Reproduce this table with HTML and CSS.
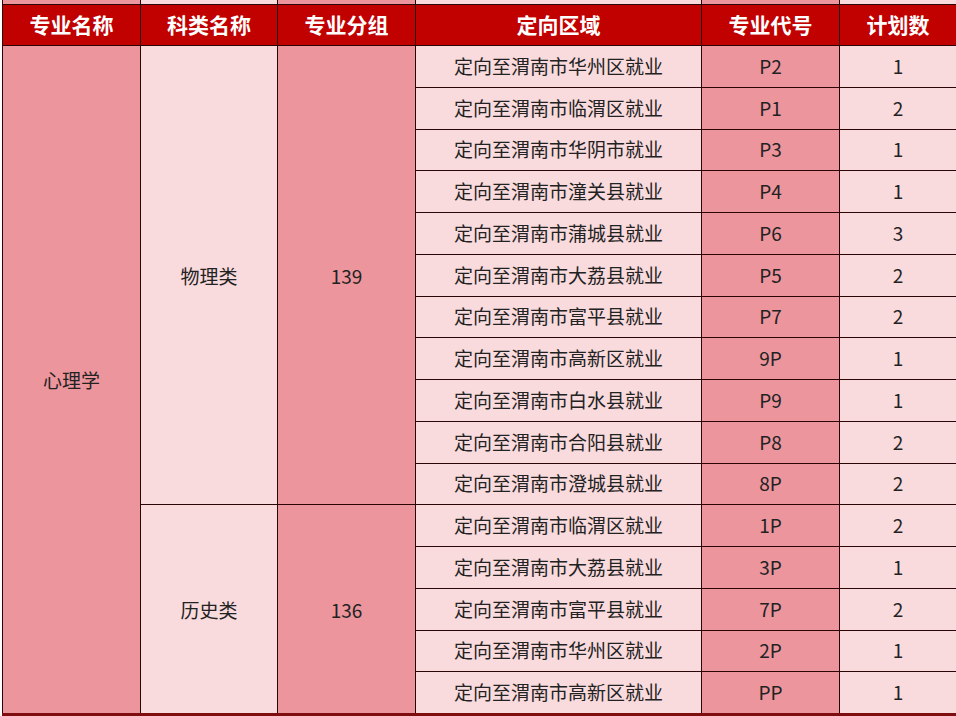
FILE: index.html
```html
<!DOCTYPE html>
<html lang="zh">
<head>
<meta charset="utf-8">
<title>招生计划</title>
<link rel="stylesheet" href="styles.css">
</head>
<body>
<div class="sheet">
  <div class="cell dark"></div>
  <div class="cell light"></div>
  <div class="cell dark"></div>
  <div class="cell light"></div>
  <div class="cell dark"></div>
  <div class="cell light"></div>

  <div class="cell head">专业名称</div>
  <div class="cell head">科类名称</div>
  <div class="cell head">专业分组</div>
  <div class="cell head">定向区域</div>
  <div class="cell head">专业代号</div>
  <div class="cell head">计划数</div>

  <div class="cell dark major">心理学</div>
  <div class="cell light cat-a">物理类</div>
  <div class="cell dark grp-a">139</div>
  <div class="cell light cat-b">历史类</div>
  <div class="cell dark grp-b">136</div>

  <div class="cell light area">定向至渭南市华州区就业</div><div class="cell dark code">P2</div><div class="cell light num">1</div>
  <div class="cell light area">定向至渭南市临渭区就业</div><div class="cell dark code">P1</div><div class="cell light num">2</div>
  <div class="cell light area">定向至渭南市华阴市就业</div><div class="cell dark code">P3</div><div class="cell light num">1</div>
  <div class="cell light area">定向至渭南市潼关县就业</div><div class="cell dark code">P4</div><div class="cell light num">1</div>
  <div class="cell light area">定向至渭南市蒲城县就业</div><div class="cell dark code">P6</div><div class="cell light num">3</div>
  <div class="cell light area">定向至渭南市大荔县就业</div><div class="cell dark code">P5</div><div class="cell light num">2</div>
  <div class="cell light area">定向至渭南市富平县就业</div><div class="cell dark code">P7</div><div class="cell light num">2</div>
  <div class="cell light area">定向至渭南市高新区就业</div><div class="cell dark code">9P</div><div class="cell light num">1</div>
  <div class="cell light area">定向至渭南市白水县就业</div><div class="cell dark code">P9</div><div class="cell light num">1</div>
  <div class="cell light area">定向至渭南市合阳县就业</div><div class="cell dark code">P8</div><div class="cell light num">2</div>
  <div class="cell light area">定向至渭南市澄城县就业</div><div class="cell dark code">8P</div><div class="cell light num">2</div>
  <div class="cell light area">定向至渭南市临渭区就业</div><div class="cell dark code">1P</div><div class="cell light num">2</div>
  <div class="cell light area">定向至渭南市大荔县就业</div><div class="cell dark code">3P</div><div class="cell light num">1</div>
  <div class="cell light area">定向至渭南市富平县就业</div><div class="cell dark code">7P</div><div class="cell light num">2</div>
  <div class="cell light area">定向至渭南市华州区就业</div><div class="cell dark code">2P</div><div class="cell light num">1</div>
  <div class="cell light area">定向至渭南市高新区就业</div><div class="cell dark code">PP</div><div class="cell light num">1</div>
</div>
</body>
</html>
```

FILE: styles.css
```css
html, body {
  margin: 0;
  padding: 0;
  width: 956px;
  height: 716px;
  overflow: hidden;
  background: #ffffff;
}

.sheet {
  margin-left: 2px;
  width: 953px;
  height: 713px;
  display: grid;
  grid-template-columns: 137px 136px 137px 285px 137px 116px;
  grid-template-rows: 4px 40px repeat(16, 1fr);
  gap: 1px;
  padding-left: 1px;
  background: #2a0606;
  border-bottom: 3px solid #7e0d0f;
  font-family: "Noto Sans CJK SC", "Noto Sans", sans-serif;
  font-size: 19px;
  color: #222222;
}

.cell {
  display: flex;
  align-items: center;
  justify-content: center;
  white-space: nowrap;
  overflow: hidden;
}

.dark { background: #ec959d; }
.light { background: #f9dadd; }

.head {
  background: #c10000;
  color: #ffffff;
  font-weight: 700;
  font-size: 21px;
  padding-bottom: 3px;
}

.major { grid-column: 1; grid-row: 3 / 19; }
.cat-a { grid-column: 2; grid-row: 3 / 14; }
.grp-a { grid-column: 3; grid-row: 3 / 14; }
.cat-b { grid-column: 2; grid-row: 14 / 19; }
.grp-b { grid-column: 3; grid-row: 14 / 19; }

.area { grid-column: 4; padding-bottom: 2px; }
.code { grid-column: 5; padding-bottom: 2px; }
.num { grid-column: 6; padding-bottom: 2px; }
```
